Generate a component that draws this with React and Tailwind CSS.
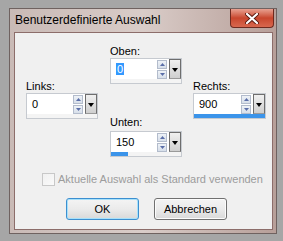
import React from "react";

const font = { fontFamily: '"Liberation Sans", Arial, sans-serif' };

const Spinner = () => (
  <div className="flex flex-col gap-[1px] mr-[2px]">
    <div className="w-[10px] h-[9px] border border-[#b3bccc] bg-gradient-to-b from-[#eef2f7] to-[#d7dfea] flex items-center justify-center">
      <svg width="5" height="3" viewBox="0 0 5 3"><path d="M2.5 0 L5 3 L0 3 Z" fill="#5a6ea8" /></svg>
    </div>
    <div className="w-[10px] h-[9px] border border-[#b3bccc] bg-gradient-to-b from-[#eef2f7] to-[#d7dfea] flex items-center justify-center">
      <svg width="5" height="3" viewBox="0 0 5 3"><path d="M0 0 L5 0 L2.5 3 Z" fill="#5a6ea8" /></svg>
    </div>
  </div>
);

const DropButton = () => (
  <div className="w-[12px] h-[20px] border border-[#6e6e6e] border-b-[#9a9a9a] bg-gradient-to-b from-[#f0f0f0] to-[#cfcfcf] flex items-center justify-center pt-[2px]">
    <svg width="6" height="4" viewBox="0 0 6 4"><path d="M0 0 L6 0 L3 4 Z" fill="#000" /></svg>
  </div>
);

const SpinField = ({ value, selected, barClass }) => (
  <div className="border border-[#c6cad0] bg-[#f4f4f4]">
    <div className="flex h-[20px] bg-white items-center">
      <div className="flex-1 pl-[5px] text-[11px] leading-[13px] text-black">
        {selected ? <span className="bg-[#3399ff] text-white px-[1px]">{value}</span> : value}
      </div>
      <Spinner />
      <DropButton />
    </div>
    <div className="h-[4px] flex items-end">
      <div className={"h-[4px] bg-[#3b94ea] " + barClass} />
    </div>
  </div>
);

const Label = ({ children, className = "" }) => (
  <div className={"text-[11px] leading-[14px] text-black " + className}>{children}</div>
);

export default function App() {
  return (
    <div className="w-[283px] h-[241px] bg-[#a6a6a6] pt-[8px] pl-[9px] pr-[6px] pb-[7px] overflow-hidden" style={font}>
      <div className="h-full flex flex-col border border-[#6f6260] bg-gradient-to-r from-[#c9bab6] via-[#d9ccc8] to-[#b79f99] pl-[4px] pr-[3px] pb-[3px]">
        <div className="h-[23px] flex items-start justify-between">
          <div className="pt-[4px] pl-[1px] text-[12px] leading-[15px] text-black">Benutzerdefinierte Auswahl</div>
          <div className="w-[44px] h-[19px] -mr-[1px] rounded-b-[4px] border border-t-0 border-[#6e2a1f] bg-gradient-to-b from-[#e7a191] via-[#c8462d] to-[#d8674e] flex items-center justify-center">
            <svg width="14" height="11" viewBox="0 0 14 11">
              <path d="M2 1 L12 10 M12 1 L2 10" stroke="#5a1a10" strokeWidth="4" strokeLinecap="round" />
              <path d="M2 1 L12 10 M12 1 L2 10" stroke="#fff" strokeWidth="2.2" strokeLinecap="round" />
            </svg>
          </div>
        </div>
        <div className="flex-1 bg-[#f0f0f0] border border-[#8c6d6a] pb-[9px]">
          <div className="flex items-start">
            <div className="ml-[11px] w-[72px] pt-[46px]">
              <Label>Links:</Label>
              <SpinField value="0" barClass="w-0" />
            </div>
            <div className="ml-[12px] w-[72px] pt-[11px]">
              <Label>Oben:</Label>
              <SpinField value="0" selected barClass="w-0" />
              <Label className="mt-[31px] mb-[2px]">Unten:</Label>
              <SpinField value="150" barClass="w-[17px]" />
            </div>
            <div className="ml-[11px] w-[73px] pt-[46px]">
              <Label>Rechts:</Label>
              <SpinField value="900" barClass="w-full" />
            </div>
          </div>
          <div className="mt-[16px] ml-[27px] flex items-center gap-[3px]">
            <div className="w-[13px] h-[13px] border border-[#c8c8c8] bg-gradient-to-br from-[#f0f0f0] to-[#fafafa]" />
            <span className="text-[11px] leading-[13px] text-[#9c9c9c]">Aktuelle Auswahl als Standard verwenden</span>
          </div>
          <div className="mt-[12px] ml-[51px] flex gap-[15px]">
            <div className="w-[73px] h-[22px] rounded-[3px] border border-[#3c8fd0] shadow-[inset_0_0_0_1px_#a7e1fb] bg-gradient-to-b from-[#f4f4f4] via-[#ebebeb] to-[#d9d9d9] flex items-center justify-center text-[11px] text-black">OK</div>
            <div className="w-[73px] h-[22px] rounded-[3px] border border-[#707070] shadow-[inset_0_0_0_1px_#fcfcfc] bg-gradient-to-b from-[#f4f4f4] via-[#ebebeb] to-[#d9d9d9] flex items-center justify-center text-[11px] text-black">Abbrechen</div>
          </div>
        </div>
      </div>
    </div>
  );
}
